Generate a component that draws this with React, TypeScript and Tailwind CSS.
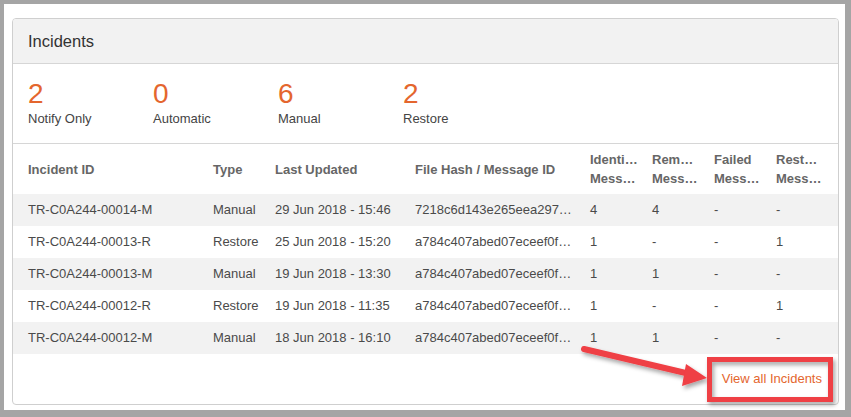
import * as React from "react"

const stats = [
  { value: 2, label: "Notify Only" },
  { value: 0, label: "Automatic" },
  { value: 6, label: "Manual" },
  { value: 2, label: "Restore" },
]

const headers = [
  ["Incident ID"],
  ["Type"],
  ["Last Updated"],
  ["File Hash / Message ID"],
  ["Identi…", "Mess…"],
  ["Rem…", "Mess…"],
  ["Failed", "Mess…"],
  ["Rest…", "Mess…"],
]

const rows = [
  ["TR-C0A244-00014-M", "Manual", "29 Jun 2018 - 15:46", "7218c6d143e265eea297…", "4", "4", "-", "-"],
  ["TR-C0A244-00013-R", "Restore", "25 Jun 2018 - 15:20", "a784c407abed07eceef0f…", "1", "-", "-", "1"],
  ["TR-C0A244-00013-M", "Manual", "19 Jun 2018 - 13:30", "a784c407abed07eceef0f…", "1", "1", "-", "-"],
  ["TR-C0A244-00012-R", "Restore", "19 Jun 2018 - 11:35", "a784c407abed07eceef0f…", "1", "-", "-", "1"],
  ["TR-C0A244-00012-M", "Manual", "18 Jun 2018 - 16:10", "a784c407abed07eceef0f…", "1", "1", "-", "-"],
]

const grid = "grid grid-cols-[185px_62px_140px_175px_62px_62px_62px_1fr]"

export default function App() {
  return (
    <div
      className="relative h-[417px] w-[851px] bg-[#a5a5a5] pt-[4px] pr-[6px] pb-[7px] pl-[4px]"
      style={{ fontFamily: '"Liberation Sans", Arial, sans-serif' }}
    >
      <div className="h-full w-full bg-white pt-[14px] pr-[6px] pb-[5px] pl-[8px]">
        <div className="flex h-full flex-col overflow-hidden rounded-[4px] border border-[#cfcfcf] bg-white">
          {/* Header */}
          <div className="flex h-[45px] items-center border-b border-[#d6d6d6] bg-[#f2f2f2] px-[15px] text-[16.5px] text-[#333]">
            Incidents
          </div>

          {/* Stats */}
          <div className="flex h-[80px] border-b border-[#d6d6d6] px-[15px] pt-[15px]">
            {stats.map((s) => (
              <div key={s.label} className="w-[125px]">
                <div className="text-[28px] leading-[30px] text-[#e4662e]">{s.value}</div>
                <div className="mt-[2px] text-[13px] leading-[15px] text-[#444]">{s.label}</div>
              </div>
            ))}
          </div>

          {/* Table */}
          <div className={`${grid} h-[50px] items-center pl-[15px] text-[13px] font-bold leading-[19px] text-[#666]`}>
            {headers.map((h, i) => (
              <div key={i} className="pr-[8px]">
                {h.map((line) => (
                  <div key={line} className="whitespace-nowrap">
                    {line}
                  </div>
                ))}
              </div>
            ))}
          </div>
          {rows.map((r, i) => (
            <div
              key={i}
              className={`${grid} h-[32px] items-center pl-[15px] text-[13px] text-[#4a4a4a] ${
                i % 2 === 0 ? "bg-[#f2f2f2]" : "bg-white"
              }`}
            >
              {r.map((c, j) => (
                <div key={j} className="whitespace-nowrap pr-[6px]">
                  {c}
                </div>
              ))}
            </div>
          ))}

          {/* Footer link */}
          <div className="flex flex-1 items-center justify-end pr-[16px]">
            <a href="#incidents" className="text-[13px] text-[#e4662e]">
              View all Incidents
            </a>
          </div>
        </div>
      </div>

      {/* Annotation: arrow + highlight box */}
      <svg className="pointer-events-none absolute left-0 top-0" width="851" height="417">
        <defs>
          <filter id="sh" x="-20%" y="-20%" width="140%" height="160%">
            <feDropShadow dx="2" dy="3" stdDeviation="2" floodColor="#000" floodOpacity="0.35" />
          </filter>
        </defs>
        <g filter="url(#sh)">
          <line x1="584" y1="349" x2="690" y2="374" stroke="#ef3f45" strokeWidth="6" strokeLinecap="round" />
          <polygon points="707,378 686,364 682,386" fill="#ef3f45" />
          <rect x="709.5" y="359.5" width="121" height="40" fill="none" stroke="#ef3f45" strokeWidth="5" />
        </g>
      </svg>
    </div>
  )
}
